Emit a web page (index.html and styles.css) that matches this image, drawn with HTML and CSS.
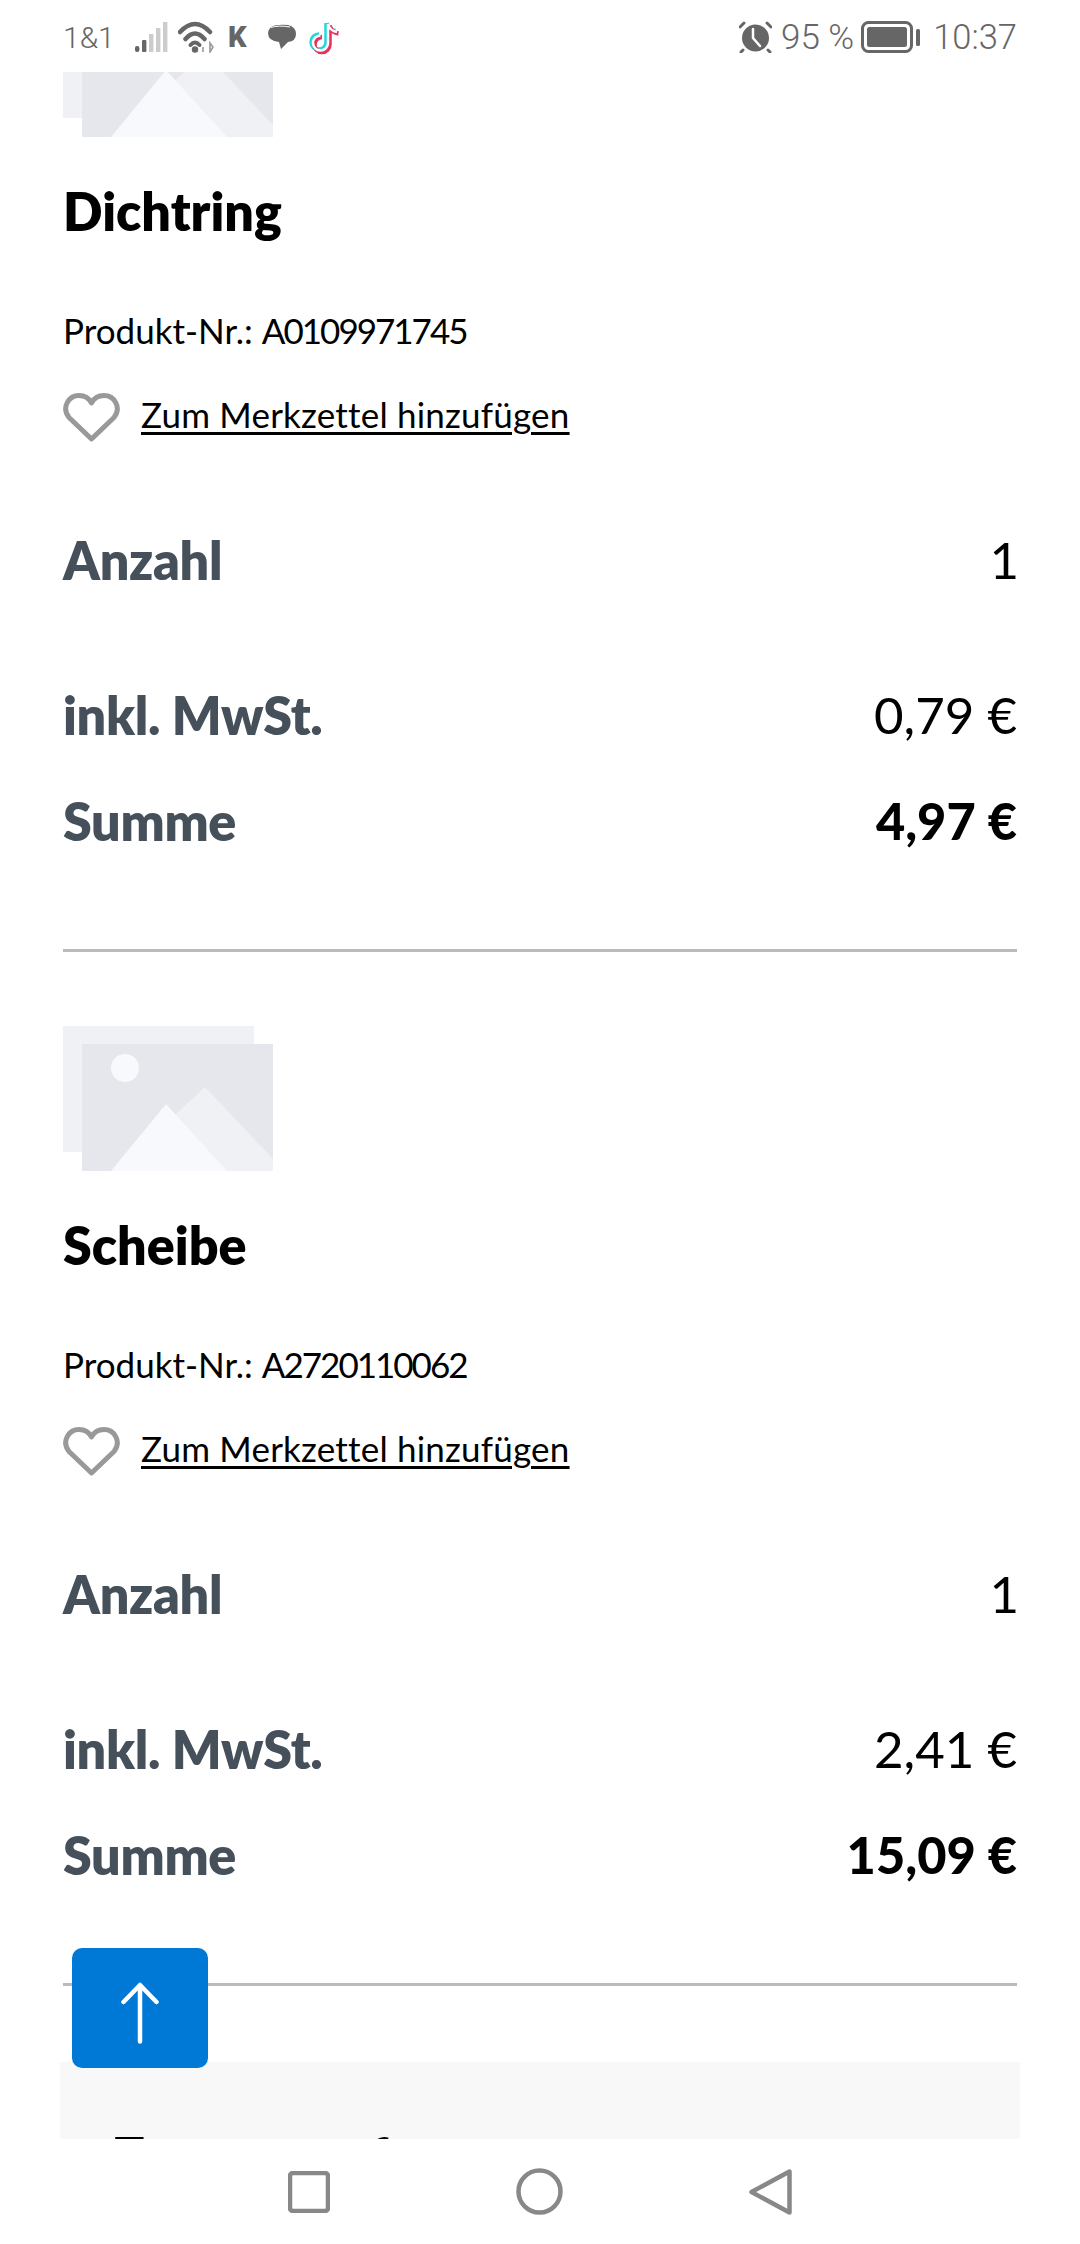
FILE: index.html
```html
<!DOCTYPE html>
<html lang="de">
<head>
<meta charset="utf-8">
<title>Warenkorb</title>
<link rel="stylesheet" href="styles.css">
</head>
<body>
<svg class="defs" width="0" height="0" aria-hidden="true">
  <symbol id="placeholder" viewBox="0 0 210 145">
    <rect x="0" y="0" width="191" height="126" fill="#f0f1f5"/>
    <rect x="19" y="18" width="191" height="127" fill="#e6e7ec"/>
    <circle cx="62" cy="42" r="14" fill="#f8f9fc"/>
    <polygon points="142,61 210,133 210,145 100,145 100,100" fill="#f0f1f5"/>
    <polygon points="103,78 164,145 48,145" fill="#f8f9fc"/>
  </symbol>
  <symbol id="heart" viewBox="0 0 57 49">
    <path d="M28.5 46 L6 24.5 C-2 14 6 2.5 16 2.5 C21 2.5 26 5 28.5 10 C31 5 36 2.5 41 2.5 C51 2.5 59 14 51 24.5 Z" fill="none" stroke="#999" stroke-width="5" stroke-linejoin="round"/>
  </symbol>
</svg>
<div class="phone">
  <header class="status">
    <div class="status-left">
      <span class="carrier">1&amp;1</span>
      <svg class="ic-signal" width="33" height="31" viewBox="0 0 33 31">
        <rect x="0" y="24" width="4.4" height="6" rx="2" fill="#666"/>
        <rect x="7" y="18" width="4.4" height="12" rx="1" fill="#666"/>
        <rect x="14" y="12" width="4.4" height="18" fill="#ccc"/>
        <rect x="21" y="6" width="4.4" height="24" fill="#ccc"/>
        <rect x="28" y="0" width="4.4" height="30" fill="#ccc"/>
      </svg>
      <svg class="ic-wifi" width="37" height="32" viewBox="0 0 37 32">
        <path d="M2 11 Q17 -5 32 11 M7.500 18 Q17 7 26.500 18" fill="none" stroke="#666" stroke-width="4.500" stroke-linecap="round"/>
        <path d="M12.500 24 Q17 19 21.500 24" fill="none" stroke="#666" stroke-width="4" stroke-linecap="round"/>
        <circle cx="17" cy="28.500" r="3.200" fill="#666"/>
        <path d="M25 26 L25 31 M32 22 L32 31 L35 26 Z" fill="none" stroke="#999" stroke-width="1.600"/>
      </svg>
      <span class="ic-k">K</span>
      <svg class="ic-chat" width="28" height="26" viewBox="0 0 28 26">
        <path d="M3 3 Q8 0 20 1 Q28 3 28 10 Q28 17 20 18 L13 25 L11 18 Q0 17 0 9 Q0 6 3 3 Z" fill="#666"/>
        <path d="M3 3.500 Q10 1 22 3" fill="none" stroke="#fff" stroke-width="1"/>
      </svg>
      <svg class="ic-tiktok" width="30" height="35" viewBox="0 0 30 35">
        <g fill="none" stroke-width="4.500">
          <path d="M19 4 V23 A7.500 7.500 0 1 1 11.500 15.500 M19 4 Q21 11 28 12" stroke="#25d8e0" transform="translate(-1.500 -1)"/>
          <path d="M19 4 V23 A7.500 7.500 0 1 1 11.500 15.500 M19 4 Q21 11 28 12" stroke="#e8315f" transform="translate(1.500 1.500)"/>
          <path d="M19 4 V23 A7.500 7.500 0 1 1 11.500 15.500 M19 4 Q21 11 28 12" stroke="#fff" stroke-width="2.500"/>
        </g>
      </svg>
    </div>
    <div class="status-right">
      <svg class="ic-alarm" width="33" height="32" viewBox="0 0 33 32">
        <circle cx="16.500" cy="17" r="13.500" fill="#666"/>
        <path d="M14 8 V17 L21 25" fill="none" stroke="#fff" stroke-width="2.500" stroke-linecap="round"/>
        <path d="M1 6 L5 2 M28 2 L32 6 M4 29 L2 31 M29 29 L31 31" stroke="#666" stroke-width="3" stroke-linecap="round"/>
      </svg>
      <span class="batt-text">95 %</span>
      <svg class="ic-batt" width="59" height="32" viewBox="0 0 59 32">
        <rect x="1.500" y="1.500" width="49" height="29" rx="6" fill="none" stroke="#666" stroke-width="3"/>
        <rect x="6" y="6" width="40" height="20" rx="2.500" fill="#666"/>
        <rect x="55" y="8" width="4" height="17" rx="1.500" fill="#666"/>
      </svg>
      <span class="clock">10:37</span>
    </div>
  </header>

  <main class="scroll">
    <div class="list">
      <article class="item">
        <svg class="thumb" width="210" height="145"><use href="#placeholder"/></svg>
        <h2 class="name">Dichtring</h2>
        <p class="sku">Produkt-Nr.: <span class="sku-code">A0109971745</span></p>
        <div class="wish">
          <svg width="57" height="49"><use href="#heart"/></svg>
          <a class="wish-link" href="#">Zum Merkzettel hinzufügen</a>
        </div>
        <div class="row row-qty"><span class="label">Anzahl</span><span class="value value-qty">1</span></div>
        <div class="row row-tax"><span class="label">inkl. MwSt.</span><span class="value">0,79 €</span></div>
        <div class="row row-sum"><span class="label">Summe</span><span class="value value-strong">4,97 €</span></div>
      </article>
      <article class="item">
        <svg class="thumb" width="210" height="145"><use href="#placeholder"/></svg>
        <h2 class="name">Scheibe</h2>
        <p class="sku">Produkt-Nr.: <span class="sku-code">A2720110062</span></p>
        <div class="wish">
          <svg width="57" height="49"><use href="#heart"/></svg>
          <a class="wish-link" href="#">Zum Merkzettel hinzufügen</a>
        </div>
        <div class="row row-qty"><span class="label">Anzahl</span><span class="value value-qty">1</span></div>
        <div class="row row-tax"><span class="label">inkl. MwSt.</span><span class="value">2,41 €</span></div>
        <div class="row row-sum"><span class="label">Summe</span><span class="value value-strong">15,09 €</span></div>
      </article>
      <section class="summary">
        <h2 class="summary-title">Zusammenfassung</h2>
      </section>
    </div>
    <button class="to-top" type="button" aria-label="Nach oben">
      <svg width="40" height="62" viewBox="0 0 40 62">
        <path d="M20 59.500 V3 M3.500 20 L20 3 L36.500 20" fill="none" stroke="#fff" stroke-width="4.500" stroke-linecap="round" stroke-linejoin="round"/>
      </svg>
    </button>
  </main>

  <nav class="navbar">
    <svg width="42" height="42" viewBox="0 0 42 42"><rect x="2" y="2" width="38" height="38" rx="3" fill="none" stroke="#888" stroke-width="4.500"/></svg>
    <svg width="47" height="47" viewBox="0 0 47 47"><circle cx="23.500" cy="23.500" r="21" fill="none" stroke="#888" stroke-width="4.500"/></svg>
    <svg width="43" height="46" viewBox="0 0 43 46"><path d="M40.500 2.500 V43.500 L2.500 23 Z" fill="none" stroke="#888" stroke-width="4.500" stroke-linejoin="round"/></svg>
  </nav>
</div>
</body>
</html>
```
FILE: styles.css
```css
* { box-sizing: border-box; }
html, body { margin: 0; padding: 0; background: #fff; }
body { font-family: Lato, "Noto Sans", sans-serif; color: #000; }
.defs { position: absolute; }
.phone { width: 1080px; height: 2244px; display: flex; flex-direction: column; overflow: hidden; background: #fff; }

/* status bar */
.status { height: 72px; flex: none; display: flex; justify-content: space-between; align-items: center; padding: 2px 63px 0 63px; color: #666; font-family: Roboto, sans-serif; font-weight: 300; position: relative; z-index: 1; background: #fff; }
.status-left, .status-right { display: flex; align-items: center; }
.carrier { font-size: 30px; width: 47px; }
.ic-signal { margin-left: 25px; }
.ic-wifi { margin-left: 10px; }
.ic-k { margin-left: 13px; width: 19px; font-weight: 900; font-size: 29px; line-height: 1; }
.ic-chat { margin-left: 21px; }
.ic-tiktok { margin-left: 13px; }
.ic-alarm { margin-right: 9px; }
.batt-text { font-size: 35px; margin-right: 7px; }
.ic-batt { margin-right: 13px; }
.clock { font-size: 34.5px; }

/* scroll area */
.scroll { flex: 1; position: relative; overflow: hidden; }
.list { margin-top: -154px; padding: 0 63px; }
.item { padding: 74px 0 98.5px; border-bottom: 3px solid #bbb; }
.thumb { display: block; }
.name { margin: 44px 0 0; font-size: 52px; line-height: 60px; font-weight: 800; }
.sku { margin: 67px 0 0; font-size: 35px; line-height: 44px; }
.sku-code { letter-spacing: -2px; }
.wish { margin-top: 41px; display: flex; align-items: flex-start; gap: 21px; height: 49px; }
.wish-link { font-size: 35px; line-height: 42px; letter-spacing: 0.2px; color: #000; text-decoration: underline; text-decoration-thickness: 3px; text-underline-offset: 4px; }
.row { display: flex; justify-content: space-between; font-size: 52px; line-height: 60px; }
.row-qty { margin-top: 87.5px; }
.row-tax { margin-top: 95px; }
.row-sum { margin-top: 46px; }
.label { color: #46505a; font-weight: 800; letter-spacing: -0.3px; }
.value { font-size: 51px; font-weight: 400; }
.value-qty { margin-right: -2px; }
.value-strong { font-size: 50.5px; font-weight: 900; }
.summary { margin: 76px -3px 0; padding: 64px 53px 40px; background: #f8f8f8; height: 300px; }
.summary-title { margin: 0; font-size: 52px; line-height: 60px; font-weight: 800; }
.to-top { position: absolute; left: 72px; top: 1876px; width: 136px; height: 120px; border: 0; border-radius: 10px; background: #0078d6; padding: 10px 0 0; display: flex; align-items: center; justify-content: center; }

/* nav bar */
.navbar { height: 105px; flex: none; position: relative; background: #fff; display: flex; align-items: center; justify-content: center; gap: 186px; }
```
